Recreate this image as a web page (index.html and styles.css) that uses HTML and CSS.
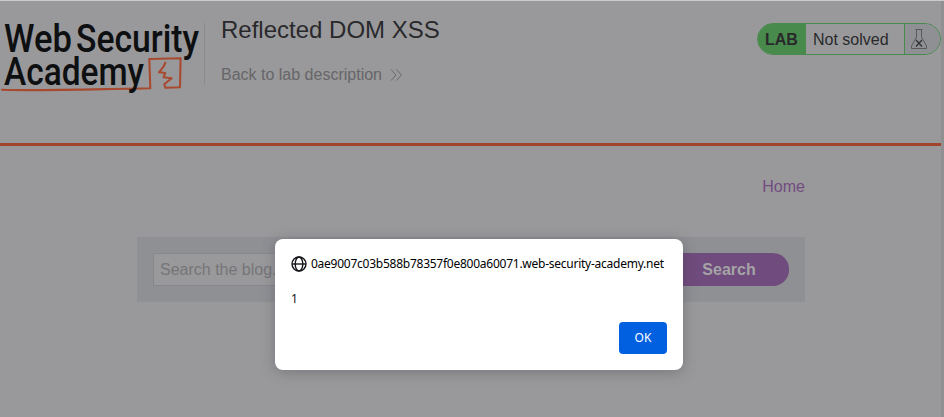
FILE: index.html
```html
<!DOCTYPE html>
<html lang="en">
<head>
<meta charset="utf-8">
<title>Reflected DOM XSS</title>
<link rel="stylesheet" href="styles.css">
</head>
<body>
<div class="page">
  <header class="header">
    <svg class="logo" width="204" height="80" viewBox="0 20 204 80">
      <g class="wordmark">
        <text x="4" y="51.5" textLength="68" lengthAdjust="spacingAndGlyphs">Web</text>
        <text x="76" y="51.5" textLength="123" lengthAdjust="spacingAndGlyphs">Security</text>
      </g>
      <path class="mark" d="M2 89.800C40 91 100 89 150.300 88.300L149.300 59L180.600 58.300L180 87.300L165.300 87.700L164.300 84.300L171.700 78.300L163.500 77.300L165.200 73L159 72.300L163.500 66.700L165.300 62.700"/>
      <text class="wordmark" x="4" y="84.500" textLength="140" lengthAdjust="spacingAndGlyphs">Academy</text>
    </svg>
    <div class="title">
      <h1>Reflected DOM XSS</h1>
      <a class="back">Back to lab description
        <svg width="13" height="14" viewBox="0 0 13 14"><path d="M1 1.500L6 7L1 12.500M6.500 1.500L11.500 7L6.500 12.500"/></svg>
      </a>
    </div>
    <div class="status">
      <span class="lab">LAB</span>
      <span class="state">Not solved</span>
      <span class="flask">
        <svg width="18" height="22" viewBox="0 0 18 22"><path d="M5.500 1.500H12.500M6.500 2V9L1.500 18V20.500H16.500V18L11.500 9V2"/><path class="cross" d="M6 12L12 18.500M12 12L6 18.500"/></svg>
      </span>
    </div>
  </header>
  <main class="content">
    <nav class="nav"><a>Home</a></nav>
    <form class="search">
      <span class="field">Search the blog...</span>
      <span class="submit">Search</span>
    </form>
  </main>
</div>
<div class="scroll-edge"></div>
<div class="dialog" role="dialog">
  <div class="origin">
    <svg width="16" height="16" viewBox="0 0 16 16"><circle cx="8" cy="8" r="7"/><ellipse cx="8" cy="8" rx="3.800" ry="7"/><path d="M1 8H15"/></svg>
    <span class="host">0ae9007c03b588b78357f0e800a60071.web-security-academy.net</span>
  </div>
  <div class="message">1</div>
  <div class="actions"><span class="ok">OK</span></div>
</div>
</body>
</html>
```

FILE: styles.css
```css
* { box-sizing: border-box; }
body {
  margin: 0;
  height: 417px;
  overflow: hidden;
  display: flex;
  background: #99999b;
  border-top: 1px solid #c9cbcb;
  font-family: "Liberation Sans", Arial, sans-serif;
  font-size: 16px;
  color: #29292c;
}
.page { flex: 1; }
.scroll-edge { width: 3px; background: #919090; }
.header {
  height: 145px;
  border-bottom: 3px solid #a0452c;
  display: flex;
  align-items: flex-start;
}
.logo { display: block; margin-top: 19px; flex: none; overflow: visible; }
.wordmark {
  font-family: Roboto, sans-serif;
  font-size: 38px;
  font-weight: 500;
  fill: #0e0f11;
}
.mark { fill: none; stroke: #a84a30; stroke-width: 2.1; stroke-linejoin: round; stroke-linecap: round; }
.title {
  margin-top: 22px;
  height: 62px;
  border-left: 1px solid #8b8b8d;
  padding-left: 16px;
}
h1 {
  margin: -8px 0 0;
  font-size: 24px;
  line-height: 30px;
  font-weight: 400;
  white-space: nowrap;
}
.back { display: flex; align-items: center; gap: 8px; margin-top: 20px; line-height: 20px; color: #666668; }
.back svg { fill: none; stroke: #68686a; stroke-width: 1; }
.status {
  margin-left: auto;
  margin-top: 22px;
  width: 184px;
  height: 32px;
  display: flex;
  border: 1px solid #488a4b;
  border-radius: 16px;
  overflow: hidden;
  line-height: 32px;
}
.lab { width: 48px; padding-left: 7px; background: #488a4b; font-weight: 700; }
.state { width: 99px; padding-left: 7px; border-right: 1px solid #488a4b; line-height: 31px; }
.flask { flex: 1; padding: 4px 0 0 5px; background: #8e9094; }
.flask svg { display: block; fill: none; stroke: #58595c; stroke-width: 1; }
.flask .cross { stroke: #333538; stroke-width: 1.4; }
.content { width: 668px; margin-left: 137px; }
.nav { padding-top: 31px; height: 91px; line-height: 20px; text-align: right; color: #734c80; }
.search {
  height: 65px;
  padding: 16px;
  display: flex;
  background: #8e9094;
}
.field {
  flex: 1;
  height: 33px;
  padding-left: 6px;
  border: 1px solid #87888b;
  background: #99999b;
  color: #757578;
  line-height: 32px;
}
.submit {
  width: 120px;
  height: 33px;
  border-radius: 0 16px 16px 0;
  background: #704b7d;
  color: #a4a4a6;
  font-weight: 700;
  text-align: center;
  line-height: 33px;
}
.dialog {
  position: absolute;
  left: 275px;
  top: 239px;
  width: 408px;
  height: 131px;
  padding: 16px;
  border-radius: 8px;
  background: #fff;
  box-shadow: 0 2px 14px rgba(58, 57, 68, .35);
  font-family: "Noto Sans", "Open Sans", sans-serif;
  font-size: 12px;
  color: #15141a;
}
.origin { display: flex; align-items: center; gap: 4px; height: 17px; }
.origin svg { fill: none; stroke: #15141a; stroke-width: 1.400; flex: none; }
.host { white-space: nowrap; line-height: 17px; letter-spacing: -0.25px; color: #000; }
.message { margin-top: 18px; line-height: 17px; }
.actions { display: flex; justify-content: flex-end; margin-top: 15px; }
.ok {
  width: 48px;
  height: 32px;
  border-radius: 4px;
  background: #0060df;
  color: #fff;
  text-align: center;
  line-height: 32px;
}
```
